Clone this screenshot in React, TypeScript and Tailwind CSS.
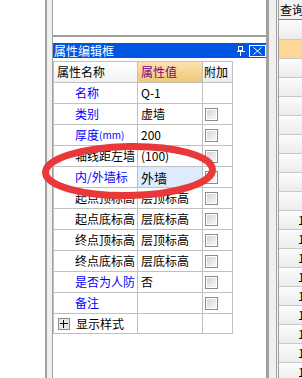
import React from 'react'

type Row = {
  name: React.ReactNode
  value: string
  blue: boolean
  check: boolean
  selected?: boolean
}

const rows: Row[] = [
  { name: '名称', value: 'Q-1', blue: true, check: false },
  { name: '类别', value: '虚墙', blue: true, check: true },
  {
    name: (
      <>
        厚度<span className="text-[10px]">(mm)</span>
      </>
    ),
    value: '200',
    blue: true,
    check: true,
  },
  { name: '轴线距左墙', value: '(100)', blue: false, check: true },
  { name: '内/外墙标', value: '外墙', blue: true, check: true, selected: true },
  { name: '起点顶标高', value: '层顶标高', blue: false, check: true },
  { name: '起点底标高', value: '层底标高', blue: false, check: true },
  { name: '终点顶标高', value: '层顶标高', blue: false, check: true },
  { name: '终点底标高', value: '层底标高', blue: false, check: true },
  { name: '是否为人防', value: '否', blue: true, check: true },
  { name: '备注', value: '', blue: true, check: true },
]

function Checkbox() {
  return (
    <div className="w-[13px] h-[13px] border border-[#8c8c8c] bg-white p-px">
      <div className="w-full h-full bg-gradient-to-br from-[#d4d4d4] to-[#f8f8f8]" />
    </div>
  )
}

function PropRow({ row }: { row: Row }) {
  return (
    <div className="flex h-[21px] border-b border-[#c0c0c0]">
      <div
        className={`w-[84px] shrink-0 border-r border-[#c0c0c0] pl-[21px] flex items-center whitespace-nowrap ${
          row.blue ? 'text-[#0000ff]' : 'text-black'
        }`}
      >
        {row.name}
      </div>
      <div
        className={`w-[65px] shrink-0 border-r border-[#c0c0c0] pl-[3px] flex items-center ${
          row.selected ? 'bg-[#dcecfc] text-[13px]' : ''
        }`}
      >
        {row.value}
      </div>
      <div className="w-[30px] shrink-0 border-r border-[#c0c0c0] pl-[2px] flex items-center">
        {row.check && <Checkbox />}
      </div>
    </div>
  )
}

function PinIcon() {
  return (
    <svg width="8" height="10" viewBox="0 0 8 10" className="block">
      <rect x="1.5" y="0.5" width="4" height="4" fill="none" stroke="white" />
      <line x1="0" y1="5.5" x2="8" y2="5.5" stroke="white" />
      <line x1="3.5" y1="6" x2="3.5" y2="10" stroke="white" />
    </svg>
  )
}

function CloseButton() {
  return (
    <div className="w-[17px] h-[12px] border border-white flex items-center justify-center">
      <svg width="9" height="8" viewBox="0 0 9 8" className="block">
        <line x1="0.5" y1="0.5" x2="8.5" y2="7.5" stroke="white" />
        <line x1="8.5" y1="0.5" x2="0.5" y2="7.5" stroke="white" />
      </svg>
    </div>
  )
}

const sideRows = Array.from({ length: 19 }, (_, i) => i)

export default function App() {
  return (
    <div className="relative w-[302px] h-[378px] overflow-hidden bg-white flex text-[12px] leading-none text-black font-['Noto_Sans_CJK_SC','Noto_Sans',sans-serif]">
      {/* left margin & splitter */}
      <div className="w-[45px] shrink-0 bg-white" />
      <div className="w-[2px] shrink-0 bg-[#a0a0a0]" />
      <div className="w-[5px] shrink-0 bg-[#f0f0f0]" />

      {/* main panel */}
      <div className="w-[214px] shrink-0 flex flex-col border-l border-[#a0a0a0]">
        <div className="h-[37px] shrink-0 bg-white border-b-2 border-[#a0a0a0]" />
        <div className="h-[6px] shrink-0 bg-white" />
        <div className="h-[15px] shrink-0 bg-[#0055e3] flex items-center text-white pl-px">
          <span className="text-[12px]">属性编辑框</span>
          <div className="ml-auto flex items-center gap-[4px]">
            <PinIcon />
            <CloseButton />
          </div>
        </div>
        <div className="flex-1 bg-white pt-[3px]">
          <div className="w-[180px] border-l border-t border-[#c0c0c0]">
            <div className="flex h-[21px] border-b border-[#c0c0c0]">
              <div className="w-[84px] shrink-0 border-r border-[#c0c0c0] pl-[3px] flex items-center bg-gradient-to-b from-white to-[#f2f2f2]">
                属性名称
              </div>
              <div className="w-[65px] shrink-0 border-r border-[#c0c0c0] pl-[3px] flex items-center text-[#800080] bg-gradient-to-b from-[#fbe2ae] to-[#f2c677]">
                属性值
              </div>
              <div className="w-[30px] shrink-0 border-r border-[#c0c0c0] pl-px flex items-center bg-gradient-to-b from-white to-[#ececec]">
                附加
              </div>
            </div>
            {rows.map((row, i) => (
              <PropRow key={i} row={row} />
            ))}
            <div className="flex h-[20px] border-b border-[#c0c0c0]">
              <div className="w-[84px] shrink-0 border-r border-[#c0c0c0] pl-[4px] flex items-center gap-[6px]">
                <div className="w-[12px] h-[12px] border border-[#8c8c8c] bg-[#e6e6e6] flex items-center justify-center">
                  <svg width="8" height="8" viewBox="0 0 8 8" className="block">
                    <line x1="0" y1="3.5" x2="8" y2="3.5" stroke="black" />
                    <line x1="3.5" y1="0" x2="3.5" y2="8" stroke="black" />
                  </svg>
                </div>
                <span>显示样式</span>
              </div>
              <div className="w-[65px] shrink-0 border-r border-[#c0c0c0]" />
              <div className="w-[30px] shrink-0 border-r border-[#c0c0c0]" />
            </div>
          </div>
        </div>
      </div>

      {/* right splitter */}
      <div className="w-[3px] shrink-0 bg-[#a0a0a0]" />
      <div className="w-[7px] shrink-0 bg-[#f0f0f0]" />
      <div className="w-px shrink-0 bg-[#a0a0a0]" />
      <div className="w-px shrink-0 bg-[#f4f4f4]" />
      <div className="w-px shrink-0 bg-[#a0a0a0]" />

      {/* right panel */}
      <div className="flex-1 flex flex-col bg-white overflow-hidden">
        <div className="h-[20px] shrink-0 bg-[#f2f2f2] border-b border-[#808080] flex items-center pl-px whitespace-nowrap">
          查询
        </div>
        <div className="h-[20px] shrink-0 bg-gradient-to-b from-[#fcfcfc] to-[#ececec] border-b border-[#c8c8c8]" />
        {sideRows.map((i) => (
          <div
            key={i}
            className={`h-[19px] shrink-0 border-b border-[#c8c8c8] flex items-center pl-[19px] ${
              i === 0 ? 'bg-[#fdd796]' : 'bg-gradient-to-b from-[#fcfcfc] to-[#ececec]'
            }`}
          >
            {i >= 9 ? '1' : ''}
          </div>
        ))}
      </div>

      {/* red annotation ellipse */}
      <svg
        className="absolute left-0 top-0 pointer-events-none"
        width="302"
        height="378"
        viewBox="0 0 302 378"
      >
        <ellipse
          cx="129"
          cy="171"
          rx="83.5"
          ry="24.5"
          fill="none"
          stroke="#e8383a"
          strokeWidth="7"
          transform="rotate(-1 129 171)"
        />
      </svg>
    </div>
  )
}
